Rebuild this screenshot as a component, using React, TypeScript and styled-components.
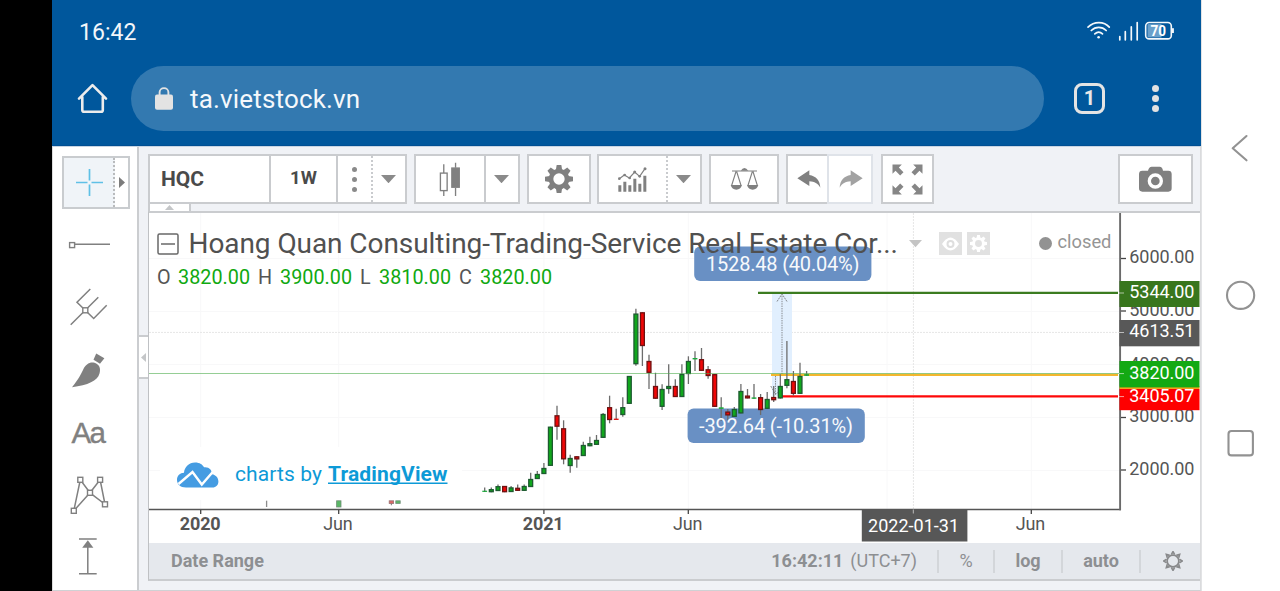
import React from "react";
import styled, { createGlobalStyle } from "styled-components";

const GlobalStyle = createGlobalStyle`
  * { box-sizing: border-box; }
  html, body { margin: 0; padding: 0; background: #fff; }
  body { font-family: Roboto, sans-serif; overflow: hidden; }
  svg { display: block; flex: none; }
`;

const Screen = styled.div`
  display: flex;
  width: 1280px;
  height: 591px;
  overflow: hidden;
  background: #fff;
`;
const Notch = styled.div`
  width: 52px;
  flex: none;
  background: #000;
`;
const Device = styled.div`
  width: 1149px;
  flex: none;
  display: flex;
  flex-direction: column;
`;
const NavBar = styled.nav`
  flex: 1;
  border-left: 1px solid #e2e3e5;
`;

const BrowserHeader = styled.header`
  height: 146px;
  flex: none;
  background: #00579c;
  border-bottom: 1px solid #004f93;
  display: flex;
  flex-direction: column;
`;
const StatusBar = styled.div`
  height: 66px;
  padding: 4px 27px 9px 27px;
  display: flex;
  align-items: center;
  justify-content: space-between;
  color: #f2f6fa;
  font-size: 23px;
  letter-spacing: 0.05px;
  span { padding-top: 3px; }
`;
const AddressRow = styled.div`
  display: flex;
  align-items: center;
  height: 65px;
`;
const HomeButton = styled.div`
  width: 79px;
  padding-left: 1px;
  display: flex;
  justify-content: center;
`;
const AddressPill = styled.div`
  width: 912.5px;
  height: 65px;
  border-radius: 33px;
  background: #3379b0;
  display: flex;
  align-items: center;
  padding-left: 24px;
  gap: 17px;
  color: #f5f8fb;
  font-size: 26px;
  letter-spacing: 0.17px;
`;
const HeaderActions = styled.div`
  flex: 1;
  display: flex;
  align-items: center;
  padding-left: 30.5px;
  gap: 47px;
`;
const TabCount = styled.div`
  width: 31px;
  height: 31px;
  border: 3px solid #e4e4e4;
  border-radius: 8px;
  color: #e8e8e8;
  font-size: 20px;
  font-weight: 700;
  line-height: 25px;
  text-align: center;
`;
const Dots = styled.div<{ $size: number; $gap: number; $color: string }>`
  display: flex;
  flex-direction: column;
  gap: ${(p) => p.$gap}px;
  &::before, &::after, & > i {
    content: "";
    display: block;
    width: ${(p) => p.$size}px;
    height: ${(p) => p.$size}px;
    border-radius: 50%;
    background: ${(p) => p.$color};
  }
`;

const Workspace = styled.div`
  flex: 1;
  display: flex;
  border-top: 1px solid #c7d5e3;
  border-right: 1px solid #dadbdd;
  border-bottom: 1px solid #cfd1d4;
  background: #f0f2f6;
`;
const ToolColumn = styled.aside`
  width: 87px;
  flex: none;
  background: #fff;
  border-right: 2px solid #cbcdd0;
  border-left: 1px solid #ddd;
`;
const CursorSlot = styled.div`
  height: 65.5px;
  padding: 9px 0 0 9px;
`;
const CursorTool = styled.div`
  display: flex;
  width: 68px;
  height: 53px;
  border: 2px solid #c9cccf;
`;
const CursorMain = styled.div`
  width: 51px;
  padding-left: 2px;
  background: #f0f4f8;
  border-right: 2px dotted #b9bbbd;
  display: flex;
  align-items: center;
  justify-content: center;
`;
const CursorMore = styled.div`
  flex: 1;
  display: flex;
  align-items: center;
  justify-content: center;
`;

const MainColumn = styled.main`
  flex: 1;
  min-width: 0;
  display: flex;
  flex-direction: column;
`;
const Toolbar = styled.div`
  height: 57px;
  flex: none;
  padding: 7px 7px 0 9px;
  display: flex;
`;
const Group = styled.div<{ $w: number; $ml?: number; $push?: boolean }>`
  width: ${(p) => p.$w}px;
  height: 50px;
  flex: none;
  margin-left: ${(p) => (p.$push ? "auto" : (p.$ml ?? 0) + "px")};
  background: #fff;
  border: 2px solid #cacccf;
  display: flex;
`;
const Cell = styled.div<{ $w?: number; $line?: "solid" | "dotted" }>`
  ${(p) => (p.$w ? `width: ${p.$w}px; flex: none;` : "flex: 1;")}
  border-right: ${(p) => (p.$line ? `2px ${p.$line} #c9cbce` : "none")};
  display: flex;
  align-items: center;
  justify-content: center;
`;
const CaretCell = styled(Cell)`
  padding-right: 2px;
`;
const RedoCell = styled(Cell)`
  margin: -2px;
  padding-left: 1px;
  border: 2px solid #dfe3e9;
`;
const SymbolCell = styled(Cell)`
  justify-content: flex-start;
  padding-left: 11px;
  color: #4a4a4a;
  font-size: 21px;
  font-weight: 700;
`;
const IntervalCell = styled(Cell)`
  color: #4a4a4a;
  font-size: 18.5px;
  font-weight: 700;
  padding-bottom: 2px;
`;
const CollapseRow = styled.div`
  height: 7px;
  margin-left: 9px;
  flex: none;
  display: flex;
`;
const CollapseTab = styled.div`
  width: 43px;
  background: #fff;
  border-left: 2px solid #cacccf;
  border-right: 2px solid #cacccf;
  display: flex;
  align-items: center;
  justify-content: center;
`;
const Lower = styled.div`
  display: flex;
  height: 370px;
`;
const SideGutter = styled.div`
  width: 9px;
  padding-top: 124px;
`;
const SideTab = styled.div`
  height: 44px;
  background: #fff;
  border: 2px solid #cacccf;
  border-left: 0;
  border-right: 0;
  display: flex;
  align-items: center;
  justify-content: center;
`;
const ChartPanel = styled.section`
  position: relative;
  flex: 1;
  border-top: 2px solid #cacccf;
  border-left: 1px solid #bfc1c4;
  border-bottom: 2px solid #cacccf;
  background: #fff;
`;
const Legend = styled.div`
  position: absolute;
  left: 8px;
  top: 13px;
`;
const TitleRow = styled.div`
  display: flex;
  align-items: center;
  height: 36px;
`;
const Title = styled.div`
  width: 730px;
  padding-left: 9.5px;
  white-space: nowrap;
  color: #505050;
  font-size: 28px;
  line-height: 36px;
  letter-spacing: -0.07px;
`;
const MiniButton = styled.div<{ $ml: number }>`
  width: 23px;
  height: 23px;
  margin-top: -1px;
  background: #e1e1e1;
  margin-left: ${(p) => p.$ml}px;
  display: flex;
  align-items: center;
  justify-content: center;
`;
const Quotes = styled.div`
  display: flex;
  height: 24px;
  margin-top: 4px;
  font-size: 19.8px;
  line-height: 24px;
  color: #555;
`;
const Quote = styled.span<{ $w: number }>`
  width: ${(p) => p.$w}px;
  display: flex;
  justify-content: space-between;
  margin-right: 8px;
  b { font-weight: 400; color: #10a910; }
`;
const MarketStatus = styled.div`
  position: absolute;
  left: 889.5px;
  top: 17px;
  display: flex;
  align-items: center;
  gap: 6px;
  color: #959595;
  font-size: 18.3px;
  line-height: 24px;
  &::before {
    content: "";
    width: 13px;
    height: 13px;
    border-radius: 50%;
    background: #929292;
    margin-top: 2px;
  }
`;
const Footer = styled.footer`
  height: 36px;
  background: #e5e8ed;
  color: #8d8f92;
  display: flex;
  align-items: center;
  font-size: 18px;
  line-height: 36px;
  padding-left: 22px;
`;
const Clock = styled.div`
  margin-left: auto;
  padding-right: 20px;
  display: flex;
  gap: 7px;
`;
const FootCell = styled.div<{ $w: number; $bold?: boolean; $shift?: number }>`
  width: ${(p) => p.$w}px;
  height: 23px;
  line-height: 22px;
  padding-left: ${(p) => p.$shift ?? 0}px;
  border-left: 2px solid #d3d6da;
  font-weight: ${(p) => (p.$bold ? 700 : 400)};
  display: flex;
  justify-content: center;
  align-items: center;
`;

const GREY = "#808080";

const Caret = ({ w = 15, color = "#8a8a8a" }: { w?: number; color?: string }) => (
  <svg width={w} height={w * 0.55} viewBox="0 0 20 11"><path d="M0 0h20L10 11z" fill={color} /></svg>
);

/* gear with eight teeth, drawn around the origin */
const Gear = ({ size, color }: { size: number; color: string }) => (
  <svg width={size} height={size} viewBox="-42 -42 84 84">
    {[0, 45, 90, 135, 180, 225, 270, 315].map((a) => (
      <path key={a} transform={`rotate(${a})`} d="M-7 -42H7L10 -24H-10Z" fill={color} />
    ))}
    <circle r="24" fill="none" stroke={color} strokeWidth="14" />
  </svg>
);

type Candle = [number, number, number, number, number, "g" | "r"];
/* x centre, wick top, body top, body bottom, wick bottom, direction */
const candles: Candle[] = [
  [484.7, 487.5, 490.7, 491.9, 492, "g"], [491.3, 487.5, 489.2, 492.2, 492.2, "g"],
  [498, 484.4, 486.2, 491, 491, "g"], [504.6, 486, 486, 492.2, 492.2, "r"],
  [511.1, 486, 487.4, 492, 492, "g"], [517.7, 484.4, 487.8, 490.8, 491, "r"],
  [524.2, 484.4, 486, 490.8, 491, "g"], [530.7, 472.7, 479, 487, 487, "g"],
  [537.3, 471, 474, 479, 479, "g"], [543.9, 463, 468, 474, 474, "g"],
  [550.4, 426.7, 426.7, 465.8, 466, "g"], [557, 405.7, 415.3, 426.7, 439.7, "r"],
  [563.6, 420.3, 428.3, 459.3, 464.3, "r"], [570.2, 454.7, 458, 466, 472.7, "g"],
  [576.8, 456.3, 456.3, 459.4, 467.7, "r"], [583.3, 441.7, 445, 456, 456, "g"],
  [589.9, 436.7, 443.2, 446.2, 446.2, "g"], [596.5, 435, 440, 444.8, 444.8, "g"],
  [603.1, 413, 414, 437.8, 438, "g"], [609.6, 395.7, 407.2, 420, 423.3, "r"],
  [616.2, 408.7, 418.6, 420, 420, "r"], [622.8, 397.3, 407.2, 415, 416.7, "g"],
  [629.3, 376, 376, 403.8, 404, "g"], [635.9, 308.7, 313.6, 364.2, 365.7, "g"],
  [642.4, 312.3, 312.3, 346, 366, "r"], [649, 354.7, 361, 372.8, 389, "r"],
  [655.5, 372.7, 386, 398.7, 399, "r"], [662.1, 384.3, 389, 406.8, 410, "g"],
  [668.7, 364.3, 386, 389, 393.7, "g"], [675.3, 379.3, 386, 397, 397, "r"],
  [681.9, 364.3, 374, 397, 397, "g"], [688.4, 356.3, 361, 374, 384, "g"],
  [695, 351.3, 358, 359.4, 371, "g"], [701.5, 348, 359.2, 370.8, 371, "r"],
  [708.1, 366, 369.3, 376, 378.7, "r"], [714.7, 374, 374.2, 406.8, 407, "r"],
  [721.2, 397.3, 407.3, 408.9, 420.7, "g"], [727.8, 409, 411.6, 415.4, 421.7, "r"],
  [734.3, 407, 409, 416.8, 417, "g"], [740.9, 384, 391, 413.4, 413.5, "g"],
  [747.5, 389, 395.6, 398.4, 398.4, "r"], [754, 384, 397.4, 398.8, 399, "g"],
  [760.6, 394, 397.2, 410, 415, "r"], [767.2, 392, 399, 408.8, 409, "g"],
  [773.7, 386, 397, 400.2, 402, "r"], [780.3, 374.3, 386, 398.4, 398.4, "g"],
  [786.9, 341, 379.2, 385.8, 388.3, "g"], [793.4, 371, 381, 393.8, 395.7, "r"],
  [800, 362.7, 376, 393.8, 394, "g"], [806.6, 371, 374.2, 375.8, 376, "g"],
];

const CandleMark = ({ c: [x, wt, bt, bb, wb, dir] }: { c: Candle }) => {
  const up = dir === "g";
  const thin = bb - bt < 2;
  return (
    <g>
      <path d={`M${x} ${wt}V${wb}`} stroke="#6c6c6c" strokeWidth="1.3" />
      {thin ? (
        <rect x={x - 2.4} y={bt} width="4.8" height={bb - bt} fill={up ? "#1aa83a" : "#e01818"} />
      ) : (
        <rect x={x - 1.95} y={bt + 0.5} width="3.9" height={bb - bt - 1} fill={up ? "#10a71c" : "#f00606"} stroke={up ? "#1d5a30" : "#6e1111"} strokeWidth="1.3" />
      )}
    </g>
  );
};

const ChartText = ({ x, y, w, size = 18, fill = "#555", bold = false, children }: {
  x: number; y: number; w: number; size?: number; fill?: string; bold?: boolean; children: string;
}) => (
  <text x={x} y={y} textLength={w} fontSize={size} fill={fill} fontWeight={bold ? 700 : 400}>{children}</text>
);

const timeTicks = [200.7, 338.7, 543.9, 688.3, 1031.3];

const Chart = () => (
  <svg width="1051" height="330" viewBox="149 213 1051 330" fontFamily="Roboto, sans-serif">
    <g stroke="#f8f8f9" strokeWidth="1">
      {[258.5, 311.5, 364.5, 417.5, 470.5].map((y) => <path key={y} d={`M149 ${y}H1119`} />)}
      {[...timeTicks, 887].map((x) => <path key={x} d={`M${x} 213V509`} />)}
    </g>
    <rect x="160" y="447" width="302" height="53" fill="#fff" />
    <path d="M149 332.4H1119" stroke="#e6e6e6" strokeWidth="1" strokeDasharray="2 1" />
    <path d="M913.4 213V509" stroke="#e6e6e6" strokeWidth="1" strokeDasharray="2 1" />

    <rect x="772" y="293" width="20" height="81" fill="#e1effe" />
    <rect x="772" y="374" width="6.5" height="22" fill="#e1effe" />
    <g fill="none" stroke="#85898e" strokeWidth="1">
      <path d="M782 296V374M775.5 376V394" strokeDasharray="1.4 1" />
      <path d="M777 301.5L782 294L787 301.5" strokeDasharray="2 0.7" />
      <path d="M770.8 386L775.5 394.5L780.2 390.5" strokeDasharray="2 1" />
    </g>

    <rect x="694.2" y="246.5" width="177.2" height="34.5" rx="6" fill="#6990c4" />
    <rect x="687.6" y="408.6" width="177.2" height="34.5" rx="6" fill="#6990c4" />

    <path d="M758 292.8H1118" stroke="#3b7c20" strokeWidth="2.3" />
    <path d="M771 374.9H1118" stroke="#f3b72e" strokeWidth="2.2" />
    <path d="M781 396.4H1118" stroke="#fe0808" strokeWidth="2.3" />

    {candles.map((c) => <CandleMark key={c[0]} c={c} />)}
    <g opacity="0.75">
      <path d="M266.6 500.7V507" stroke="#666" strokeWidth="1.3" />
      <rect x="336.6" y="500.8" width="4.4" height="6.2" fill="#25a035" stroke="#44694c" strokeWidth="0.8" />
      <path d="M391.4 501V505.3" stroke="#666" strokeWidth="1.2" />
      <rect x="389.2" y="500.8" width="4.4" height="2.8" fill="#cf3434" stroke="#774848" strokeWidth="0.8" />
      <rect x="395.8" y="500.8" width="4.4" height="2.6" fill="#25a035" stroke="#44694c" strokeWidth="0.8" />
    </g>
    <path d="M149 373.5H1119" stroke="#4fae4f" strokeOpacity="0.6" strokeWidth="1" />

    <ChartText x={706} y={270.7} w={153.5} size={20} fill="#f7f9fc">1528.48 (40.04%)</ChartText>
    <ChartText x={699} y={432.8} w={154} size={20} fill="#f7f9fc">-392.64 (-10.31%)</ChartText>

    <path d="M186 487.5C180 487.5 177 484 177 480C177 475.5 180 473 184 472.8C184.5 467 189 462.6 195 462.6C200 462.6 202.5 464.8 204 467.3C209 466.6 212 470 212 474.3C216 475 218.4 478 218.4 481.5C218.4 485 216 487.5 212.5 487.5Z" fill="#459ce2" />
    <path d="M178.5 484L192.5 472L201.8 484.5L214.5 470" fill="none" stroke="#fff" strokeWidth="2.4" />
    <ChartText x={235} y={481.2} w={87} size={21} fill="#0d9ad7">charts by</ChartText>
    <ChartText x={328} y={481.2} w={119.5} size={21} fill="#0d9ad7" bold>TradingView</ChartText>
    <path d="M328 483.3H447.5" stroke="#0d9ad7" strokeWidth="1.6" />

    <path d="M149 509.5H1121" stroke="#555" strokeWidth="1.4" />
    <path d="M1120.1 213V510.3" stroke="#6a6a6a" strokeWidth="1.9" />
    <g stroke="#444" strokeWidth="1.3">
      {timeTicks.map((x) => <path key={x} d={`M${x} 510V514`} />)}
      {[258.5, 311, 364, 417.5, 470].map((y) => <path key={y} d={`M1121 ${y}H1126`} />)}
    </g>
    <ChartText x={1129.3} y={262.9} w={65}>6000.00</ChartText>
    <ChartText x={1129.3} y={315.9} w={65}>5000.00</ChartText>
    <ChartText x={1129.3} y={369.6} w={65}>4000.00</ChartText>
    <ChartText x={1129.3} y={422.2} w={65}>3000.00</ChartText>
    <ChartText x={1129.3} y={474.9} w={65}>2000.00</ChartText>
    <rect x="1119.5" y="389" width="80" height="21.2" fill="#fe0000" />
    <ChartText x={1129.3} y={402} w={65} fill="#fff">3405.07</ChartText>
    <rect x="1119.5" y="386" width="80" height="3" fill="#f2a21c" />
    <rect x="1119.5" y="361" width="80" height="26.4" fill="#13a913" />
    <rect x="1119.5" y="281" width="80" height="26" fill="#38761d" />
    <rect x="1119.5" y="320" width="80" height="26.3" fill="#585858" />
    <ChartText x={1129.3} y={298} w={65} fill="#fff">5344.00</ChartText>
    <ChartText x={1129.3} y={337.2} w={65} fill="#fff">4613.51</ChartText>
    <ChartText x={1129.3} y={378.5} w={65} fill="#fff">3820.00</ChartText>
    <g stroke="#fff" strokeOpacity="0.6" strokeWidth="1">
      {[293, 332.5, 373.6, 396.6].map((y) => <path key={y} d={`M1119 ${y}H1124`} />)}
    </g>

    <ChartText x={179.7} y={529.5} w={41} bold>2020</ChartText>
    <ChartText x={323.3} y={529.5} w={29.5}>Jun</ChartText>
    <ChartText x={522.7} y={529.5} w={41} bold>2021</ChartText>
    <ChartText x={672.9} y={529.5} w={29.5}>Jun</ChartText>
    <ChartText x={1015.8} y={529.5} w={29.5}>Jun</ChartText>
    <rect x="861.8" y="509.5" width="105.6" height="32" fill="#575757" />
    <path d="M913.3 509.5V513.5" stroke="#bbb" strokeWidth="1" />
    <ChartText x={868} y={532.4} w={91} fill="#fff">2022-01-31</ChartText>
  </svg>
);

const ToolIcon = ({ row, children }: { row: number; children: React.ReactNode }) => (
  <svg width="84" height="62.5" viewBox={`53 ${212.5 + row * 62.5} 84 62.5`} fill="none" stroke={GREY} strokeWidth="1.5">
    {children}
  </svg>
);
const Knot = ({ x, y }: { x: number; y: number }) => (
  <rect x={x - 2.5} y={y - 2.5} width="5" height="5" fill="#fff" strokeWidth="1.4" />
);

const App = () => (
  <>
    <GlobalStyle />
    <Screen>
      <Notch />
      <Device>
        <BrowserHeader>
          <StatusBar>
            <span>16:42</span>
            <svg width="88" height="22" viewBox="1086 19.5 88 22" fill="none" stroke="#f4f8fb">
              <path d="M1088 26.6C1094 20.5 1104 20.5 1109.3 26.6M1091.3 30C1095.5 25.8 1102 25.8 1106.2 30M1094.8 33.4C1097.2 31.2 1100.2 31.2 1102.5 33.4" strokeWidth="1.7" strokeLinecap="round" />
              <circle cx="1098.6" cy="36.8" r="1.3" fill="#f4f8fb" stroke="none" />
              <path d="M1119.8 36V39.3M1125.3 31.2V39.3M1131.3 26.4V39.3M1137.2 22V39.3" strokeWidth="1.7" strokeLinecap="round" />
              <rect x="1147.5" y="23.6" width="14" height="13.4" fill="#6aa0cb" stroke="none" />
              <rect x="1145.7" y="22" width="25.6" height="16.4" rx="3.5" strokeWidth="1.6" />
              <path d="M1172.9 27.7V32.5" strokeWidth="2" />
              <text x="1150.4" y="35.8" textLength="15.6" lengthAdjust="spacingAndGlyphs" fontSize="15.5" fontWeight="700" fill="#fff" stroke="none" fontFamily="Roboto, sans-serif">70</text>
            </svg>
          </StatusBar>
          <AddressRow>
            <HomeButton>
              <svg width="31" height="31" viewBox="76.5 83.5 31 31" fill="none" stroke="#ececec" strokeWidth="2.6" strokeLinejoin="round" strokeLinecap="round">
                <path d="M78.5 99.2L92 85.6L105.5 99.2M81.8 97.5V110.5Q81.8 112.3 83.6 112.3H100.6Q102.3 112.3 102.3 110.5V97.5" />
              </svg>
            </HomeButton>
            <AddressPill>
              <svg width="18" height="23" viewBox="0 0 18 23">
                <rect x="0" y="7.5" width="18" height="15.3" rx="2" fill="#e3e3e3" />
                <path d="M4.6 8V5.3A4.4 4.2 0 0 1 13.4 5.3V8" fill="none" stroke="#e3e3e3" strokeWidth="1.9" />
              </svg>
              <span>ta.vietstock.vn</span>
            </AddressPill>
            <HeaderActions>
              <TabCount>1</TabCount>
              <Dots $size={7} $gap={3} $color="#e2e2e2"><i /></Dots>
            </HeaderActions>
          </AddressRow>
        </BrowserHeader>
        <Workspace>
          <ToolColumn>
            <CursorSlot>
              <CursorTool>
                <CursorMain>
                  <svg width="27" height="27" viewBox="0 0 27 27" stroke="#5fc0e6" strokeWidth="1.7">
                    <path d="M0 13.5H11.5M15.5 13.5H27M13.5 0V11.5M13.5 15.5V27" />
                  </svg>
                </CursorMain>
                <CursorMore>
                  <svg width="6" height="11" viewBox="0 0 6 11"><path d="M0 0L6 5.5L0 11Z" fill="#7c7c7c" /></svg>
                </CursorMore>
              </CursorTool>
            </CursorSlot>
            <ToolIcon row={0}>
              <path d="M75 243.8H110" />
              <Knot x={72.1} y={244.6} />
            </ToolIcon>
            <ToolIcon row={1}>
              <path d="M70.7 324.7L98.3 297.3M90.3 289L77 302.2L93.7 318.5L106.7 305.3" />
              <Knot x={85.3} y={310.3} />
            </ToolIcon>
            <ToolIcon row={2}>
              <path d="M72 386.8C79 378 80.5 374.5 83 369.5C85.5 363.5 90 361 94.5 362.2C99.5 363.8 101 368 99.5 373C97.5 380.5 88 384.5 72 386.8Z" fill={GREY} stroke="none" />
              <path d="M96.2 353L104.4 357.8L100 363.2L93.5 359.2Z" fill={GREY} stroke="none" />
            </ToolIcon>
            <ToolIcon row={3}>
              <text x="71.5" y="442.8" textLength="34.5" fontSize="29.5" fill={GREY} stroke={GREY} strokeWidth="0.4" fontFamily="Liberation Sans, sans-serif">Aa</text>
            </ToolIcon>
            <ToolIcon row={4}>
              <path d="M73.8 510.3L80.3 479.3L90 492.3L73.8 510.3M90 492.3L100.1 479.3L105 503.8L90 492.3" />
              <Knot x={80.3} y={479.3} /><Knot x={100.1} y={479.3} /><Knot x={90} y={492.3} />
              <Knot x={73.8} y={510.3} /><Knot x={105} y={503.8} />
            </ToolIcon>
            <ToolIcon row={5}>
              <path d="M79 539H96.7M79 573.7H96.7M87.8 545V573.7" />
              <path d="M87.8 540.3L93.4 547.7H82.2Z" fill={GREY} stroke="none" />
            </ToolIcon>
          </ToolColumn>
          <MainColumn>
            <Toolbar>
              <Group $w={259}>
                <SymbolCell $w={121} $line="solid">HQC</SymbolCell>
                <IntervalCell $w={67} $line="solid">1W</IntervalCell>
                <Cell $w={35} $line="dotted"><Dots $size={5} $gap={5} $color="#8a8a8a"><i /></Dots></Cell>
                <CaretCell><Caret /></CaretCell>
              </Group>
              <Group $w={106} $ml={7}>
                <Cell $w={70} $line="solid">
                  <svg width="22" height="35" viewBox="117 47 65 104" fill="none" stroke={GREY} strokeWidth="4">
                    <path d="M131 54V80M131 132V148M166 49V64M166 124V148" />
                    <rect x="121" y="80" width="20" height="52" />
                    <rect x="155" y="65" width="22" height="57" fill={GREY} />
                  </svg>
                </Cell>
                <CaretCell><Caret /></CaretCell>
              </Group>
              <Group $w={64} $ml={7}>
                <Cell><Gear size={28} color={GREY} /></Cell>
              </Group>
              <Group $w={105} $ml={6}>
                <Cell $w={69} $line="dotted">
                  <svg width="29" height="25" viewBox="655 64 87 75">
                    <path d="M656 119h9v19h-9zM671 108h9v30h-9zM686 119h9v19h-9zM701 99h9v39h-9zM716 114h9v24h-9zM731 90h9v48h-9z" fill={GREY} />
                    <path d="M659 99L674 88L689 97L705 79L720 92L736 69" fill="none" stroke={GREY} strokeWidth="3.5" />
                    <g fill={GREY}><circle cx="659" cy="99" r="4" /><circle cx="675" cy="88" r="4" /><circle cx="690" cy="97" r="4" /><circle cx="705" cy="79" r="4.5" /><circle cx="720" cy="92" r="4" /><circle cx="736" cy="69" r="4.5" /></g>
                  </svg>
                </Cell>
                <CaretCell><Caret /></CaretCell>
              </Group>
              <Group $w={70} $ml={7}>
                <Cell>
                  <svg width="29" height="24" viewBox="89 65 87 72" fill="none" stroke={GREY} strokeWidth="3.6">
                    <path d="M95 77H170M107 79L94 120M109 79L122 120M156 79L143 120M158 79L171 120" />
                    <path d="M121 76Q132 60 144 76Z" fill={GREY} stroke="none" />
                    <path d="M91 119H125Q121 133 108 133Q95 133 91 119ZM140 119H174Q170 133 157 133Q144 133 140 119Z" fill={GREY} stroke="none" />
                  </svg>
                </Cell>
              </Group>
              <Group $w={87} $ml={7}>
                <Cell $w={41}>
                  <svg width="24" height="18" viewBox="289 76 72 54"><path d="M290 101L326 77V91C346 94 358 108 359 129C351 116 342 111 326 110V124Z" fill={GREY} /></svg>
                </Cell>
                <RedoCell>
                  <svg width="24" height="18" viewBox="289 76 72 54"><path transform="matrix(-1 0 0 1 650 0)" d="M290 101L326 77V91C346 94 358 108 359 129C351 116 342 111 326 110V124Z" fill="#a2a2a2" /></svg>
                </RedoCell>
              </Group>
              <Group $w={53} $ml={8}>
                <Cell>
                  <svg width="31" height="31" viewBox="-46.5 -46.5 93 93" fill="#868686">
                    {[0, 90, 180, 270].map((a) => (
                      <path key={a} transform={`rotate(${a})`} d="M-45 -45H-17L-26 -36L-12 -22L-22 -12L-36 -26L-45 -17Z" />
                    ))}
                  </svg>
                </Cell>
              </Group>
              <Group $w={75} $push>
                <Cell>
                  <svg width="33" height="26" viewBox="0 0 99 78">
                    <path d="M10 14H27Q30 2 38 2H62Q70 2 72 14H88Q98 14 98 24V67Q98 77 88 77H10Q0 77 0 67V24Q0 14 10 14Z" fill={GREY} />
                    <circle cx="49" cy="45" r="18" fill={GREY} stroke="#fff" strokeWidth="10" />
                  </svg>
                </Cell>
              </Group>
            </Toolbar>
            <CollapseRow><CollapseTab><svg width="9" height="5" viewBox="0 0 9 5"><path d="M0 5L4.5 0L9 5Z" fill="#c4c6c8" /></svg></CollapseTab></CollapseRow>
            <Lower>
              <SideGutter>
                <SideTab><svg width="5" height="9" viewBox="0 0 5 9"><path d="M5 0L0 4.5L5 9Z" fill="#c4c6c8" /></svg></SideTab>
              </SideGutter>
              <ChartPanel>
                <Chart />
                <Legend>
                  <TitleRow>
                    <svg width="22" height="22" viewBox="0 0 22 22" fill="none" stroke="#686868" strokeWidth="1.5"><rect x="1" y="1" width="20" height="20" rx="1.5" /><path d="M4 11H18" /></svg>
                    <Title>Hoang Quan Consulting-Trading-Service Real Estate Cor...</Title>
                    <Caret w={13} color="#c4c4c4" />
                    <MiniButton $ml={17}>
                      <svg width="17" height="14" viewBox="0 0 17 14"><path d="M0 7Q8.5 -6 17 7Q8.5 20 0 7Z" fill="#fff" /><circle cx="8.5" cy="7" r="3" fill="#fff" stroke="#dedede" strokeWidth="2" /></svg>
                    </MiniButton>
                    <MiniButton $ml={5}><Gear size={17} color="#fff" /></MiniButton>
                  </TitleRow>
                  <Quotes>
                    <Quote $w={93}>O <b>3820.00</b></Quote>
                    <Quote $w={94}>H <b>3900.00</b></Quote>
                    <Quote $w={91}>L <b>3810.00</b></Quote>
                    <Quote $w={93}>C <b>3820.00</b></Quote>
                  </Quotes>
                </Legend>
                <MarketStatus>closed</MarketStatus>
                <Footer>
                  <b>Date Range</b>
                  <Clock><b>16:42:11</b><span>(UTC+7)</span></Clock>
                  <FootCell $w={56}>%</FootCell>
                  <FootCell $w={68} $bold>log</FootCell>
                  <FootCell $w={78} $bold>auto</FootCell>
                  <FootCell $w={61} $shift={5}>
                    <svg width="20" height="20" viewBox="-30 -30 60 60" fill="none" stroke="#88898b" strokeWidth="5">
                      <circle r="17.5" />
                      {[0, 45, 90, 135, 180, 225, 270, 315].map((a) => <path key={a} transform={`rotate(${a})`} d="M-5 -19L0 -28L5 -19" />)}
                    </svg>
                  </FootCell>
                </Footer>
              </ChartPanel>
            </Lower>
          </MainColumn>
        </Workspace>
      </Device>
      <NavBar>
        <svg width="78" height="591" viewBox="1202 0 78 591" fill="none" stroke="#929292" strokeWidth="2.1" strokeLinecap="round" strokeLinejoin="round">
          <path d="M1246.5 136L1232.7 148.3L1246.5 160.3" />
          <circle cx="1240.6" cy="295.3" r="13.6" />
          <rect x="1228.5" y="431" width="24.4" height="24.4" rx="3" />
        </svg>
      </NavBar>
    </Screen>
  </>
);

export default App;
